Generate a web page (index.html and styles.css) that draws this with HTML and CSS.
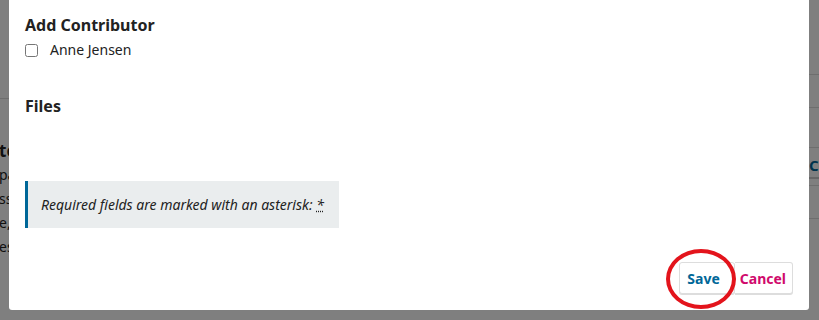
FILE: index.html
```html
<!DOCTYPE html>
<html lang="en">
<head>
    <meta charset="UTF-8">
    <title>Add Contributor</title>
    <link rel="stylesheet" href="styles.css">
</head>
<body>
    <div class="page">
        <div class="page-left">
            <div class="page-rule"></div>
            <h3 class="page-title">te</h3>
            <p>pa</p>
            <p>ss</p>
            <p>e,</p>
            <p>es</p>
        </div>
        <div class="page-right">
            <div class="row row-a"></div>
            <div class="row row-b"></div>
            <div class="row row-c"><span class="page-link">C</span></div>
            <div class="row row-d"></div>
            <div class="row row-e"></div>
        </div>
    </div>
    <div class="overlay"></div>

    <div class="modal">
        <div class="modal-body">
            <section class="field">
                <h2 class="field-label">Add Contributor</h2>
                <label class="checkbox-row">
                    <input type="checkbox">
                    <span>Anne Jensen</span>
                </label>
            </section>

            <section class="field field-files">
                <h2 class="field-label">Files</h2>
            </section>

            <p class="required-notice">
                Required fields are marked with an asterisk: <abbr class="required" title="Required">*</abbr>
            </p>
        </div>

        <div class="modal-footer">
            <button class="pkp-button save">Save</button>
            <button class="pkp-button cancel">Cancel</button>
        </div>
    </div>

    <!-- annotation drawn over the save button -->
    <div class="highlight-ring"></div>
</body>
</html>
```

FILE: styles.css
```css
html, body {
    margin: 0;
    padding: 0;
    height: 320px;
    overflow: hidden;
}
body {
    font-family: 'Noto Sans', 'Open Sans', sans-serif;
    background-color: #fff;
    color: #222;
}

/* page behind the modal */
.page {
    display: flex;
    justify-content: space-between;
    height: 320px;
}
.page-left {
    width: 30px;
    padding-top: 98px;
    font-size: 14px;
    line-height: 24px;
}
.page-rule {
    border-top: 1px solid #ddd;
}
.page-left .page-title {
    margin: 40px 0 0 -1px;
    font-size: 17px;
    line-height: 24px;
    font-weight: bold;
}
.page-left p {
    margin: 0 0 0 -1px;
}
.page-right {
    width: 30px;
    padding-top: 74px;
}
.row {
    border-top: 1px solid #ddd;
}
.row-a { height: 32px; }
.row-b { height: 39px; }
.row-c {
    height: 32px;
    border-bottom: 2px solid #ccc;
    box-sizing: border-box;
    padding: 6px 0 0 20px;
}
.page-link {
    color: #006798;
    font-weight: bold;
    font-size: 15px;
}
.row-d { margin-top: 6px; height: 32px; }
.row-e { height: 80px; }

.overlay {
    position: fixed;
    inset: 0;
    background: rgba(0, 0, 0, 0.5);
}

/* modal */
.modal {
    position: fixed;
    left: 9px;
    top: 0;
    width: 800px;
    height: 310px;
    background-color: #fff;
    border-radius: 0 0 3px 3px;
    display: flex;
    flex-direction: column;
}
.modal-body {
    padding: 13px 16px 0 16px;
}
.field-label {
    margin: 0;
    font-size: 16px;
    line-height: 24px;
    font-weight: bold;
    color: #222;
}
.checkbox-row {
    display: flex;
    align-items: center;
    margin-top: 3px;
    font-size: 14px;
    line-height: 20px;
}
.checkbox-row input {
    width: 13px;
    height: 13px;
    margin: 0 12px 0 0;
}
.field-files {
    margin-top: 34px;
}
.required-notice {
    margin: 63px 0 0 0;
    width: 298px;
    padding: 0 0 0 13px;
    height: 47px;
    line-height: 47px;
    background-color: #eaedee;
    border-left: 3px solid #006798;
    font-size: 14px;
    font-style: italic;
    color: #222;
}
.required {
    text-decoration: underline dotted;
}

.modal-footer {
    margin-top: auto;
    display: flex;
    justify-content: flex-end;
    padding: 0 16px 16px 0;
}
.pkp-button {
    font-family: inherit;
    font-size: 14px;
    font-weight: bold;
    height: 32px;
    background: #fff;
    border: 1px solid #ddd;
    border-radius: 3px;
    box-shadow: 0 1px 0 #ddd;
    cursor: pointer;
}
.save {
    color: #006798;
    padding: 0 14px 0 7px;
}
.cancel {
    color: #d00a6c;
    padding: 0 6px 0 5px;
    border-left: none;
    border-radius: 0 3px 3px 0;
}

.highlight-ring {
    position: absolute;
    left: 666px;
    top: 249px;
    width: 62px;
    height: 52px;
    border: 4px solid #e3141c;
    border-radius: 50%;
}
```
